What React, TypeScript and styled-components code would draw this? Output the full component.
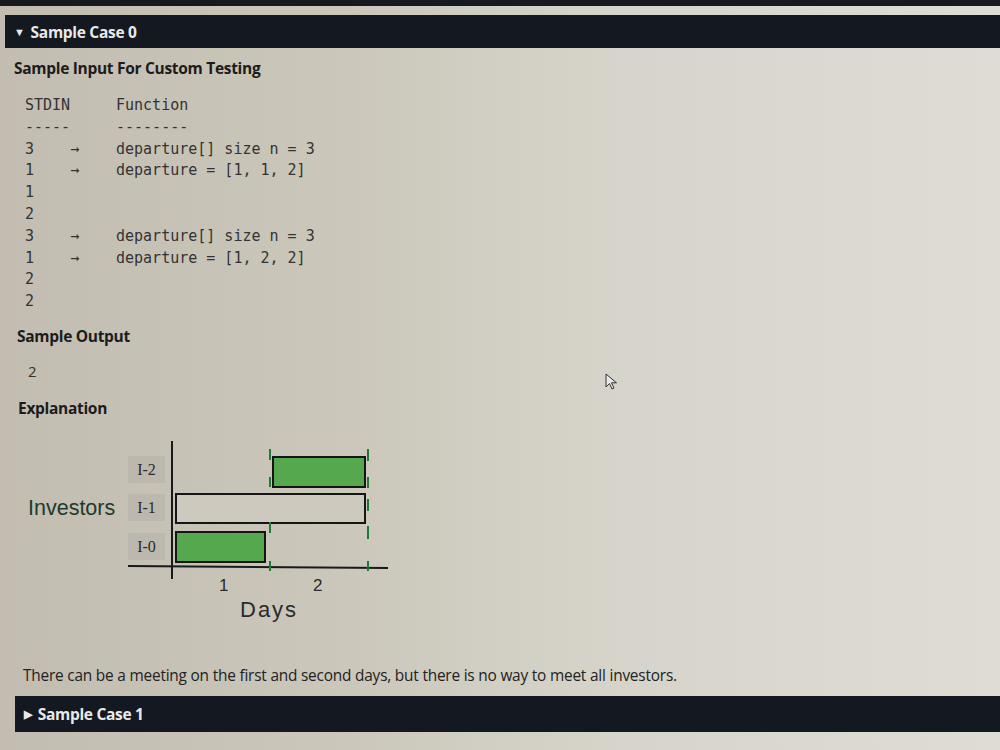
import React from "react";
import styled, { createGlobalStyle } from "styled-components";

const GlobalStyle = createGlobalStyle`
  html, body {
    margin: 0;
    padding: 0;
    width: 1000px;
    height: 750px;
    overflow: hidden;
    background: linear-gradient(90deg, #c2bdb0 0%, #cbc7bb 35%, #d6d4ca 60%, #dedcd4 100%);
  }
`;

const Page = styled.div`
  position: relative;
  width: 1000px;
  height: 750px;
  overflow: hidden;
  font-family: "Open Sans", "Noto Sans", sans-serif;
  color: #1f1f1f;
`;

const TopStrip = styled.div`
  height: 6px;
  background: #161a20;
`;

const CaseBar = styled.div<{ $top: number; $left: number; $height: number }>`
  display: flex;
  align-items: center;
  gap: 6px;
  height: ${(p) => p.$height}px;
  margin-top: ${(p) => p.$top}px;
  margin-left: ${(p) => p.$left}px;
  padding-left: 9px;
  background: #141921;
  color: #e9e9e9;
  font-weight: 700;
  font-size: 15.5px;
  letter-spacing: -0.3px;
`;

const Arrow = styled.span`
  font-size: 11px;
`;

const Content = styled.div`
  display: flex;
  flex-direction: column;
  padding-left: 14px;
`;

const SectionTitle = styled.div<{ $top: number; $indent?: number }>`
  margin-top: ${(p) => p.$top}px;
  margin-left: ${(p) => p.$indent ?? 0}px;
  font-weight: 700;
  font-size: 15.5px;
  letter-spacing: -0.3px;
  color: #1c1c1c;
  line-height: 22px;
`;

const CodeBlock = styled.div`
  display: grid;
  grid-template-columns: 91px auto;
  margin-top: 16px;
  margin-left: 11px;
  margin-bottom: -2px;
  font-family: "DejaVu Sans Mono", monospace;
  font-size: 15px;
  line-height: 21.8px;
  color: #333;
  white-space: pre;
`;

const Cell = styled.div``;

const OutputValue = styled.div`
  margin-top: 13px;
  margin-left: 14px;
  font-size: 15px;
  color: #333;
  line-height: 22px;
`;

const ChartWrap = styled.div`
  margin-top: 20px;
  margin-left: 14px;
  display: flex;
`;

const Paragraph = styled.div`
  margin-top: 36px;
  margin-left: 9px;
  font-size: 15.4px;
  letter-spacing: -0.2px;
  color: #222;
  line-height: 22px;
`;

const Cursor = styled.svg`
  position: absolute;
  left: 605px;
  top: 373px;
`;

const green = "#55a84e";
const dash = "#1f7a3a";

const dashesA: [number, number][] = [
  [10, 21],
  [38, 48],
  [83, 94],
  [122, 132],
];
const dashesB: [number, number][] = [
  [10, 22],
  [38, 49],
  [60, 72],
  [87, 100],
  [122, 132],
];

function Chart() {
  return (
    <svg width="380" height="190" viewBox="0 0 380 190">
      <text x="0" y="76" fontFamily="Liberation Sans, Arial, sans-serif" fontSize="21.5" fill="#1f3a2c">
        Investors
      </text>
      {[
        { y: 17, t: "I-2" },
        { y: 55, t: "I-1" },
        { y: 94, t: "I-0" },
      ].map((r) => (
        <g key={r.t}>
          <rect x="100" y={r.y} width="37" height="27" fill="#bcb8ad" />
          <text x="118.5" y={r.y + 19} textAnchor="middle" fontFamily="Liberation Serif, serif" fontSize="16" fill="#2a2a2a">
            {r.t}
          </text>
        </g>
      ))}
      {/* axes */}
      <line x1="144" y1="2" x2="144" y2="140" stroke="#1a1a1a" strokeWidth="2" />
      <line x1="100" y1="127" x2="360" y2="129" stroke="#1a1a1a" strokeWidth="2" />
      {/* bars */}
      <rect x="245" y="18" width="92" height="30" fill={green} stroke="#151515" strokeWidth="2" />
      <rect x="148" y="55" width="189" height="29" fill="#cdc9bf" stroke="#151515" strokeWidth="2" />
      <rect x="148" y="93" width="89" height="30" fill={green} stroke="#151515" strokeWidth="2" />
      {/* dashed guides */}
      {dashesA.map(([a, b], i) => (
        <line key={"a" + i} x1="242" y1={a} x2="242" y2={b} stroke={dash} strokeWidth="2" />
      ))}
      {dashesB.map(([a, b], i) => (
        <line key={"b" + i} x1="340" y1={a} x2="340" y2={b} stroke={dash} strokeWidth="2" />
      ))}
      <text x="191" y="152" fontFamily="Liberation Sans, Arial, sans-serif" fontSize="17" fill="#2a2a2a">1</text>
      <text x="285" y="152" fontFamily="Liberation Sans, Arial, sans-serif" fontSize="17" fill="#2a2a2a">2</text>
      <text x="212" y="178" fontFamily="Liberation Sans, Arial, sans-serif" fontSize="22" letterSpacing="2" fill="#2a2a2a">Days</text>
    </svg>
  );
}

const rows: [string, string][] = [
  ["STDIN", "Function"],
  ["-----", "--------"],
  ["3    →", "departure[] size n = 3"],
  ["1    →", "departure = [1, 1, 2]"],
  ["1", ""],
  ["2", ""],
  ["3    →", "departure[] size n = 3"],
  ["1    →", "departure = [1, 2, 2]"],
  ["2", ""],
  ["2", ""],
];

export default function App() {
  return (
    <>
      <GlobalStyle />
      <Page>
        <TopStrip />
        <CaseBar $top={9} $left={5} $height={33}>
          <Arrow>▼</Arrow>
          <span>Sample Case 0</span>
        </CaseBar>
        <Content>
          <SectionTitle $top={9}>Sample Input For Custom Testing</SectionTitle>
          <CodeBlock>
            {rows.map(([a, b], i) => (
              <React.Fragment key={i}>
                <Cell>{a}</Cell>
                <Cell>{b}</Cell>
              </React.Fragment>
            ))}
          </CodeBlock>
          <SectionTitle $top={14} $indent={3}>Sample Output</SectionTitle>
          <OutputValue>2</OutputValue>
          <SectionTitle $top={15} $indent={4}>Explanation</SectionTitle>
          <ChartWrap>
            <Chart />
          </ChartWrap>
          <Paragraph>
            There can be a meeting on the first and second days, but there is no way to meet all investors.
          </Paragraph>
        </Content>
        <CaseBar $top={9} $left={15} $height={36}>
          <Arrow>▶</Arrow>
          <span>Sample Case 1</span>
        </CaseBar>
        <Cursor width="14" height="18" viewBox="0 0 14 18">
          <path d="M1 1 L1 14 L4.5 10.5 L7 16 L9 15 L6.5 9.8 L11.5 9.8 Z" fill="#e8e8e8" stroke="#333" strokeWidth="1" />
        </Cursor>
      </Page>
    </>
  );
}
